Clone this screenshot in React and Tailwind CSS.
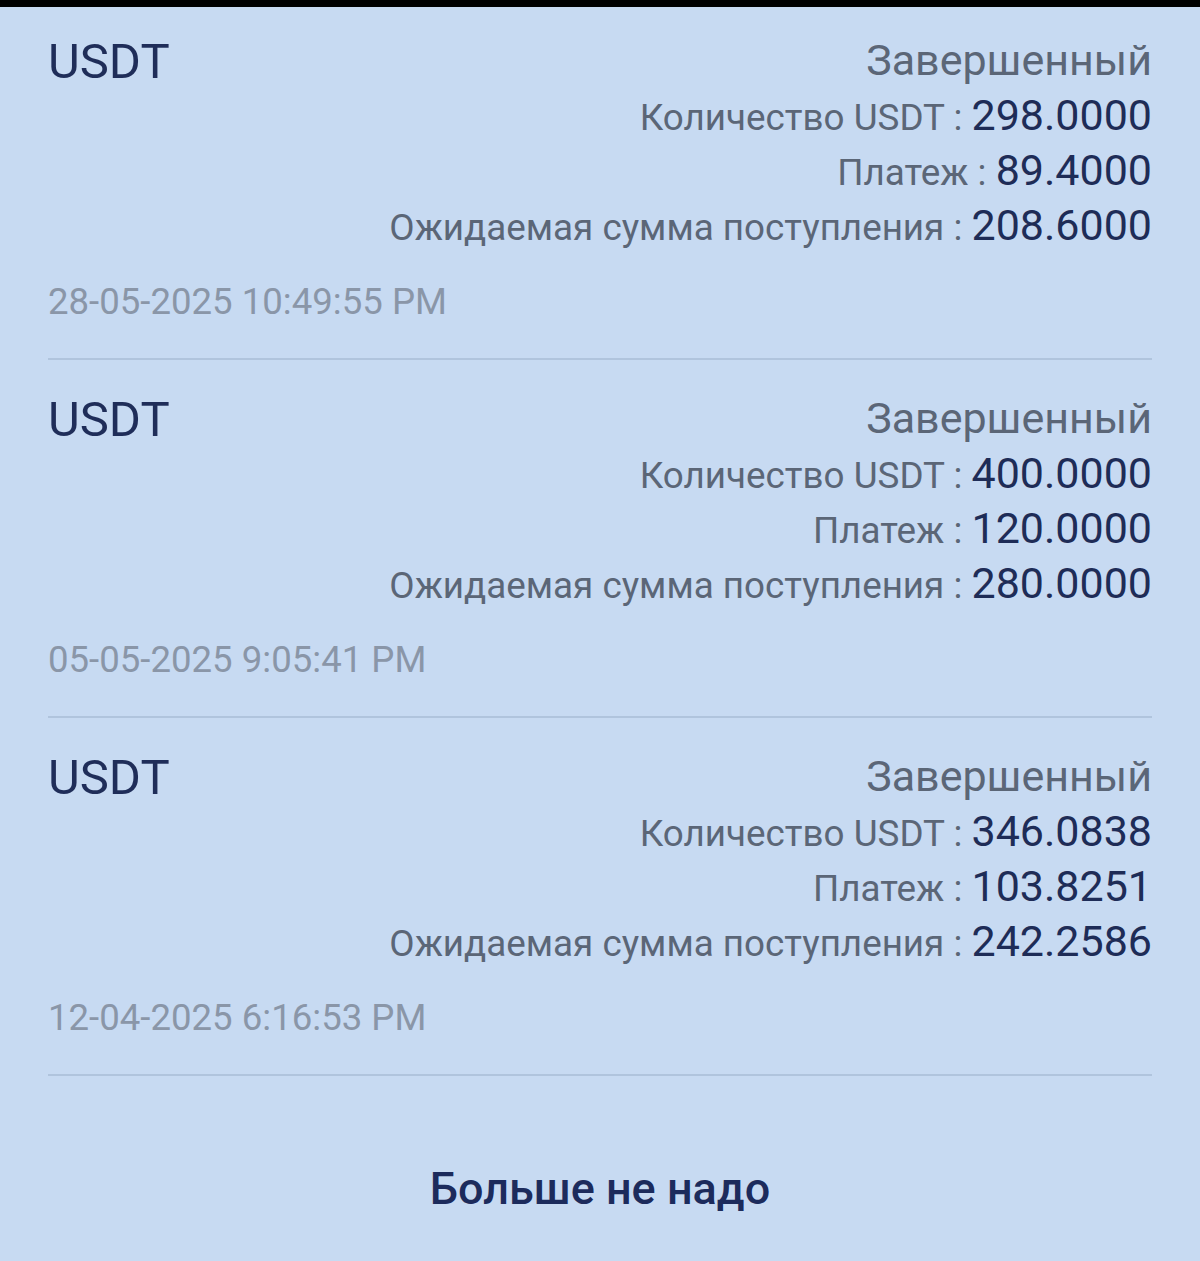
const ORDERS = [
  { amount: '298.0000', fee: '89.4000', expected: '208.6000', date: '28-05-2025 10:49:55 PM' },
  { amount: '400.0000', fee: '120.0000', expected: '280.0000', date: '05-05-2025 9:05:41 PM' },
  { amount: '346.0838', fee: '103.8251', expected: '242.2586', date: '12-04-2025 6:16:53 PM' },
]

function Row({ label, value }) {
  return (
    <div className="flex items-baseline justify-end h-[55px] leading-[55px]">
      <span className="text-[36.8px] text-[#5b6677]">{label} :&nbsp;</span>
      <span className="text-[43px] text-[#1e2c57]">{value}</span>
    </div>
  )
}

function OrderCard({ order }) {
  return (
    <div className="border-b-2 border-[#b0c4dd] pt-[30px] first:pt-[25px] pb-[36px]">
      <div className="flex justify-between">
        <div className="text-[49px] leading-[60px] h-[56px] text-[#1f2d59]">USDT</div>
        <div className="flex flex-col items-end">
          <div className="text-[43px] leading-[56px] text-[#5b6677]">Завершенный</div>
          <Row label="Количество USDT" value={order.amount} />
          <Row label="Платеж" value={order.fee} />
          <Row label="Ожидаемая сумма поступления" value={order.expected} />
        </div>
      </div>
      <div className="mt-[29px] text-[36.6px] leading-[40px] text-[#8a96a8]">{order.date}</div>
    </div>
  )
}

export default function App() {
  return (
    <div className="min-h-[1261px] bg-[#c7daf2] font-['Roboto',sans-serif]">
      <div className="h-[7px] bg-black" />
      <div className="px-[48px]">
        {ORDERS.map((o, i) => <OrderCard key={i} order={o} />)}
      </div>
      <div className="pt-[86px] text-center">
        <button className="text-[45px] leading-[54px] font-medium text-[#1c2b5c]">Больше не надо</button>
      </div>
    </div>
  )
}
